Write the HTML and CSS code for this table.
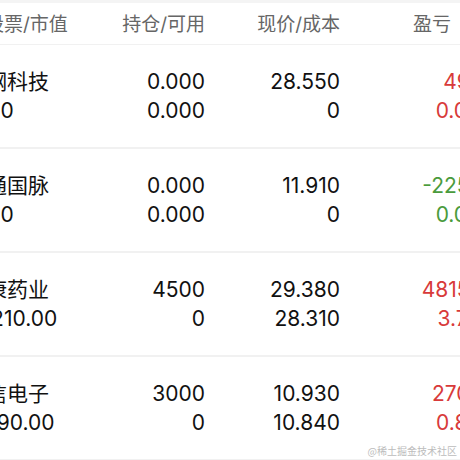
FILE: index.html
```html
<!DOCTYPE html>
<html lang="zh">
<head>
<meta charset="utf-8">
<link rel="stylesheet" href="styles.css">
</head>
<body>
<div class="viewport">
  <div class="topbar"></div>
  <div class="table">
    <div class="row head">
      <div class="c1">股票/市值</div>
      <div class="c2">持仓/可用</div>
      <div class="c3">现价/成本</div>
      <div class="c4">盈亏</div>
    </div>
    <div class="row">
      <div class="c1"><span>中钢科技</span><span>0</span></div>
      <div class="c2"><span>0.000</span><span>0.000</span></div>
      <div class="c3"><span>28.550</span><span>0</span></div>
      <div class="c4 up"><span>49.50</span><span>0.00%</span></div>
    </div>
    <div class="row">
      <div class="c1"><span>中通国脉</span><span>0</span></div>
      <div class="c2"><span>0.000</span><span>0.000</span></div>
      <div class="c3"><span>11.910</span><span>0</span></div>
      <div class="c4 down"><span>-225.00</span><span>0.00%</span></div>
    </div>
    <div class="row">
      <div class="c1"><span>健康药业</span><span>132210.00</span></div>
      <div class="c2"><span>4500</span><span>0</span></div>
      <div class="c3"><span>29.380</span><span>28.310</span></div>
      <div class="c4 up"><span>4815.00</span><span>3.78%</span></div>
    </div>
    <div class="row">
      <div class="c1"><span>立信电子</span><span>32790.00</span></div>
      <div class="c2"><span>3000</span><span>0</span></div>
      <div class="c3"><span>10.930</span><span>10.840</span></div>
      <div class="c4 up"><span>270.00</span><span>0.83%</span></div>
    </div>
  </div>
  <div class="watermark">@稀土掘金技术社区</div>
</div>
</body>
</html>
```

FILE: styles.css
```css
html, body {
  margin: 0;
  padding: 0;
  background: #ffffff;
}
body {
  font-family: "Inter", "Noto Sans CJK SC", sans-serif;
  color: #111111;
  overflow: hidden;
}
.viewport {
  position: relative;
  width: 460px;
  height: 460px;
  overflow: hidden;
}
.topbar {
  height: 3px;
  background: #f4f4f4;
}
.table {
  margin-left: -43px;
  width: 580px;
}
.row {
  display: grid;
  grid-template-columns: 100px 148px 135px 161px;
  height: 102px;
  align-items: center;
  border-bottom: 2px solid #f1f1f1;
  font-size: 21px;
  line-height: 29px;
}
.row > div {
  display: flex;
  flex-direction: column;
  white-space: nowrap;
}
.row .c1 { align-items: center; }
.row .c2, .row .c3, .row .c4 { align-items: flex-end; }
.row.head {
  height: 38px;
  padding-top: 3px;
  border-bottom: 1px solid #f1f1f1;
  font-size: 19px;
  line-height: 26px;
  color: #666666;
}
.row.head .c1 { align-items: flex-start; padding-left: 28px; }
.row.head .c4 { align-items: flex-start; padding-left: 73px; }
.up { color: #d83a3a; }
.down { color: #4a9b3c; }
.watermark {
  position: absolute;
  right: 3px;
  bottom: 2px;
  font-size: 10px;
  line-height: 14px;
  color: #bcbcbc;
  font-family: "Noto Sans CJK SC", sans-serif;
}
```
